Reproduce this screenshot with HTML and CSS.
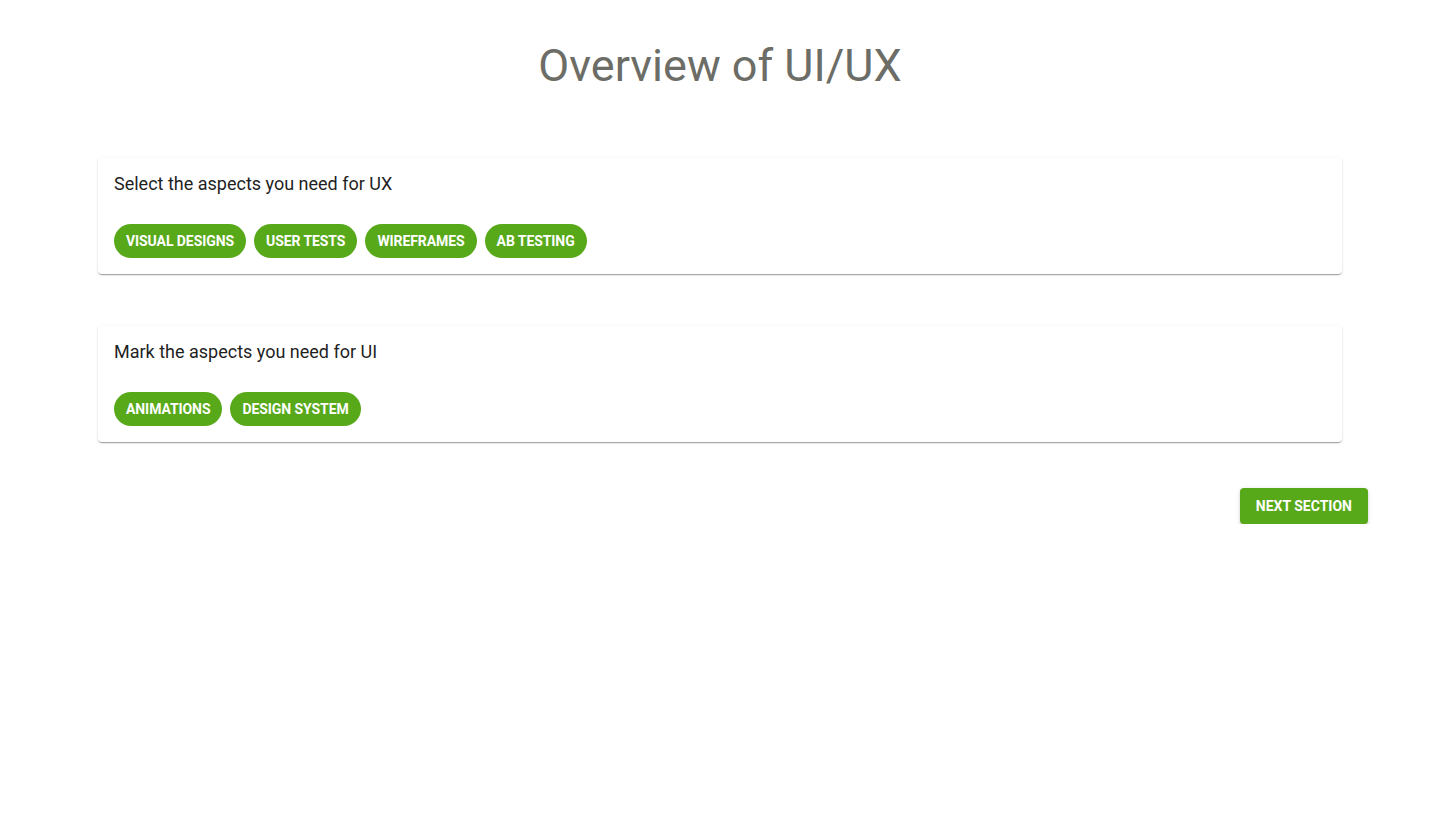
FILE: index.html
```html
<!DOCTYPE html>
<html>
<head>
<meta charset="utf-8">
<link rel="stylesheet" href="styles.css">
</head>
<body>
<main class="page">
  <h1 class="title">Overview of UI/UX</h1>
  <section class="card">
    <p class="card-text">Select the aspects you need for UX</p>
    <div class="chips">
      <button class="chip">Visual Designs</button>
      <button class="chip">User Tests</button>
      <button class="chip">Wireframes</button>
      <button class="chip">AB Testing</button>
    </div>
  </section>
  <section class="card">
    <p class="card-text">Mark the aspects you need for UI</p>
    <div class="chips">
      <button class="chip">Animations</button>
      <button class="chip">Design System</button>
    </div>
  </section>
  <div class="actions">
    <button class="next">Next Section</button>
  </div>
</main>
</body>
</html>
```
FILE: styles.css
```css
* { box-sizing: border-box; }
html, body { margin: 0; padding: 0; background: #fff; }
body { font-family: Roboto, "Liberation Sans", Arial, sans-serif; color: #1f1f1f; }
.page { display: flex; flex-direction: column; align-items: center; padding-top: 38px; }
.title {
  margin: 0 0 64px;
  font-size: 45px;
  line-height: 56px;
  font-weight: 400;
  color: #6c6d66;
}
.card {
  width: 1244px;
  background: #fff;
  border-radius: 4px;
  padding: 16px;
  box-shadow: 0 2px 1px -1px rgba(0,0,0,0.2), 0 1px 1px 0 rgba(0,0,0,0.14), 0 1px 3px 0 rgba(0,0,0,0.12);
  margin-bottom: 52px;
}
.card-text { margin: 0 0 30px; font-size: 18px; line-height: 20px; color: #1f1f1f; }
.chips { display: flex; gap: 8px; }
.chip {
  height: 34px;
  padding: 0 12px;
  border: none;
  border-radius: 17px;
  background: #58a91a;
  color: #fff;
  font-family: Roboto, "Liberation Sans", Arial, sans-serif;
  font-size: 14px;
  font-weight: 700;
  text-transform: uppercase;
  letter-spacing: -0.08px;
}
.actions { width: 1440px; display: flex; justify-content: flex-end; padding-right: 72px; margin-top: -6px; }
.next {
  height: 36px;
  padding: 0 16px;
  border: none;
  border-radius: 4px;
  background: #58a91a;
  color: #fff;
  font-family: Roboto, "Liberation Sans", Arial, sans-serif;
  font-size: 14px;
  font-weight: 700;
  text-transform: uppercase;
  box-shadow: 0 3px 1px -2px rgba(0,0,0,0.2), 0 2px 2px 0 rgba(0,0,0,0.14), 0 1px 5px 0 rgba(0,0,0,0.12);
}
```
